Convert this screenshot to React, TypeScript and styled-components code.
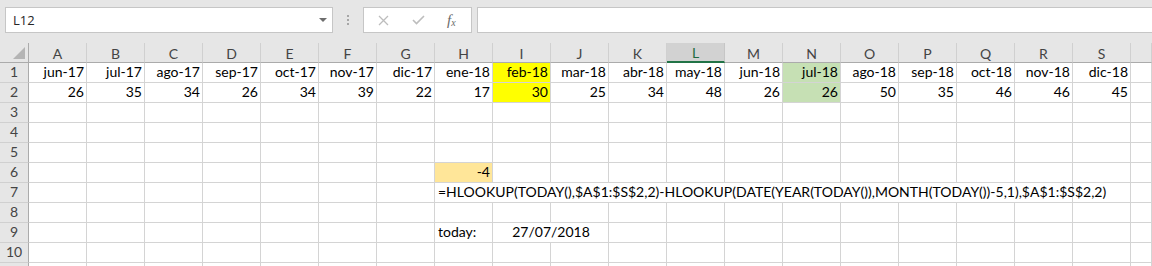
import React from "react"
import styled, { createGlobalStyle } from "styled-components"

const Global = createGlobalStyle`
  html, body {
    margin: 0;
    padding: 0;
    background: #ffffff;
    overflow: hidden;
  }
`;

const Page = styled.div`
  width: 1152px;
  height: 266px;
  overflow: hidden;
  background: #ffffff;
`;

const Toolbar = styled.div`
  height: 43px;
  background: #e6e6e6;
  display: flex;
  align-items: flex-start;
  padding: 7px 0 0 5px;
  box-sizing: border-box;
`;

const NameBox = styled.div`
  width: 328px;
  height: 26px;
  box-sizing: border-box;
  background: #ffffff;
  border: 1px solid #c6c6c6;
  display: flex;
  align-items: center;
  justify-content: space-between;
  padding: 0 5px 0 7px;
  font-family: "Open Sans", sans-serif;
  font-size: 13px;
  color: #262626;
`;

const Caret = styled.span`
  width: 0;
  height: 0;
  border-left: 4px solid transparent;
  border-right: 4px solid transparent;
  border-top: 4px solid #6d6d6d;
`;

const Grip = styled.div`
  width: 30px;
  height: 26px;
  display: flex;
  flex-direction: column;
  align-items: center;
  justify-content: center;
  gap: 2px;
  span {
    width: 2px;
    height: 2px;
    background: #a6a6a6;
  }
`;

const FxBox = styled.div`
  width: 109px;
  height: 26px;
  box-sizing: border-box;
  background: #ffffff;
  border: 1px solid #c6c6c6;
  display: flex;
  align-items: center;
  padding-left: 14px;
  gap: 23px;
`;

const Fx = styled.span`
  font-family: "Liberation Serif", serif;
  font-style: italic;
  font-size: 15px;
  color: #6a6a6a;
  margin-left: -1px;
  sub {
    font-size: 10px;
    vertical-align: -1px;
  }
`;

const FormulaInput = styled.div`
  flex: 1;
  height: 26px;
  margin-left: 5px;
  box-sizing: border-box;
  background: #ffffff;
  border: 1px solid #c6c6c6;
  border-right: none;
`;

const Sheet = styled.div`
  display: grid;
  grid-template-columns: 29px repeat(19, 58px) 1fr;
  grid-auto-rows: 20px;
  font-family: Lato, "Liberation Sans", sans-serif;
  font-size: 14px;
`;

const Corner = styled.div`
  background: #e6e6e6;
  border-right: 1px solid #ababab;
  border-bottom: 1px solid #ababab;
  display: flex;
  align-items: flex-end;
  justify-content: flex-end;
  padding: 0 3px 3px 0;
`;

const ColHead = styled.div<{ $active?: boolean }>`
  background: ${p => (p.$active ? "#d2d2d2" : "#e6e6e6")};
  color: ${p => (p.$active ? "#1e6b41" : "#444444")};
  border-right: 1px solid ${p => (p.$active ? "#c6c6c6" : "#d0d0d0")};
  border-bottom: ${p => (p.$active ? "2px solid #217346" : "1px solid #ababab")};
  display: flex;
  align-items: center;
  justify-content: center;
  padding-top: 1px;
`;

const RowHead = styled.div`
  background: #e6e6e6;
  color: #444444;
  border-right: 1px solid #ababab;
  border-bottom: 1px solid #d0d0d0;
  display: flex;
  align-items: flex-end;
  justify-content: center;
  padding-bottom: 1px;
  line-height: 18px;
`;

const Cell = styled.div<{ $align?: string; $bg?: string; $span?: number }>`
  grid-column: span ${p => p.$span || 1};
  background: ${p => p.$bg || "transparent"};
  color: #000000;
  border-right: 1px solid #d4d4d4;
  border-bottom: 1px solid #d4d4d4;
  display: flex;
  align-items: flex-end;
  justify-content: ${p =>
    p.$align === "right" ? "flex-end" : p.$align === "center" ? "center" : "flex-start"};
  padding: 0 2px 1px 3px;
  line-height: 18px;
  white-space: nowrap;
  overflow: visible;
  min-width: 0;
`;

const cols = "ABCDEFGHIJKLMNOPQRS".split("");
const months = ["jun-17", "jul-17", "ago-17", "sep-17", "oct-17", "nov-17", "dic-17", "ene-18", "feb-18", "mar-18", "abr-18", "may-18", "jun-18", "jul-18", "ago-18", "sep-18", "oct-18", "nov-18", "dic-18"];
const values = [26, 35, 34, 26, 34, 39, 22, 17, 30, 25, 34, 48, 26, 26, 50, 35, 46, 46, 45];

const fillFor = (i: number) => (i === 8 ? "#ffff00" : i === 13 ? "#c6e0b4" : undefined);

type CellDef = { text?: string; align?: string; bg?: string; span?: number };

function rowCells(r: number): CellDef[] {
  if (r === 1) return months.map((m, i) => ({ text: m, align: "right", bg: fillFor(i) }));
  if (r === 2) return values.map((v, i) => ({ text: String(v), align: "right", bg: fillFor(i) }));
  const blank = (n: number) => Array.from({ length: n }, () => ({}));
  if (r === 6) return [...blank(7), { text: "-4", align: "right", bg: "#ffe699" }, ...blank(11)];
  if (r === 7)
    return [
      ...blank(7),
      { text: "=HLOOKUP(TODAY(),$A$1:$S$2,2)-HLOOKUP(DATE(YEAR(TODAY()),MONTH(TODAY())-5,1),$A$1:$S$2,2)", span: 11 },
      ...blank(1),
    ];
  if (r === 9) return [...blank(7), { text: "today:" }, { text: "27/07/2018", align: "center", span: 2 }, ...blank(9)];
  return blank(19);
}

export default function App() {
  const rows = Array.from({ length: 11 }, (_, i) => i + 1);
  return (
    <Page>
      <Global />
      <Toolbar>
        <NameBox>
          L12
          <Caret />
        </NameBox>
        <Grip>
          <span />
          <span />
          <span />
        </Grip>
        <FxBox>
          <svg width="11" height="11" viewBox="0 0 11 11">
            <path d="M1 1 L10 10 M10 1 L1 10" stroke="#bdbdbd" strokeWidth="1.3" fill="none" />
          </svg>
          <svg width="13" height="10" viewBox="0 0 13 10">
            <path d="M1 5 L4.5 8.5 L12 1" stroke="#bdbdbd" strokeWidth="1.6" fill="none" />
          </svg>
          <Fx>
            f<sub>x</sub>
          </Fx>
        </FxBox>
        <FormulaInput />
      </Toolbar>
      <Sheet>
        <Corner>
          <svg width="12" height="12" viewBox="0 0 12 12">
            <path d="M12 0 L12 12 L0 12 Z" fill="#b4b4b4" />
          </svg>
        </Corner>
        {cols.map(c => (
          <ColHead key={c} $active={c === "L"}>
            {c}
          </ColHead>
        ))}
        <ColHead />
        {rows.map(r => (
          <React.Fragment key={r}>
            <RowHead>{r < 11 ? r : null}</RowHead>
            {rowCells(r).map((c, i) => (
              <Cell key={i} $align={c.align} $bg={c.bg} $span={c.span}>
                {c.text}
              </Cell>
            ))}
            <Cell />
          </React.Fragment>
        ))}
      </Sheet>
    </Page>
  )
}
